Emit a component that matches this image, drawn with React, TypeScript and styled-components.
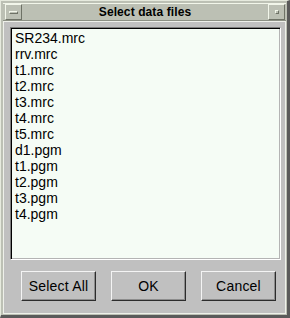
import styled, { createGlobalStyle } from "styled-components";

const files = [
  "SR234.mrc",
  "rrv.mrc",
  "t1.mrc",
  "t2.mrc",
  "t3.mrc",
  "t4.mrc",
  "t5.mrc",
  "d1.pgm",
  "t1.pgm",
  "t2.pgm",
  "t3.pgm",
  "t4.pgm",
];

export default function App() {
  return (
    <>
      <GlobalStyle />
      <Window>
        <TitleBar>
          <TitleButton>
            <MenuBar />
          </TitleButton>
          <Title>Select data files</Title>
          <TitleButton>
            <Dot />
          </TitleButton>
        </TitleBar>
        <Body>
          <ListBox>
            {files.map((f, i) => (
              <Item key={i}>{f}</Item>
            ))}
          </ListBox>
          <ButtonRow>
            <Button>Select All</Button>
            <Button>OK</Button>
            <Button>Cancel</Button>
          </ButtonRow>
        </Body>
      </Window>
    </>
  );
}

const GlobalStyle = createGlobalStyle`
  html, body {
    margin: 0;
    padding: 0;
    background: #c0c0c0;
  }
  * {
    box-sizing: border-box;
  }
`;

const Window = styled.div`
  width: 290px;
  height: 318px;
  background: #bcc0b4;
  border-top: 1px solid #e6eade;
  border-left: 1px solid #e6eade;
  border-right: 3px solid #5a5a5a;
  border-bottom: 3px solid #5a5a5a;
  padding: 2px 1px 1px 2px;
  display: flex;
  flex-direction: column;
  font-family: "Liberation Sans", Arial, sans-serif;
`;

const TitleBar = styled.div`
  height: 18px;
  display: flex;
  align-items: center;
  padding: 0 1px 0 2px;
  border-top: 1px solid #f2f6ea;
  border-bottom: 1px solid #8c9084;
`;

const TitleButton = styled.div`
  width: 17px;
  height: 16px;
  flex-shrink: 0;
  display: flex;
  align-items: center;
  justify-content: center;
  border-top: 1px solid #f2f6ea;
  border-left: 1px solid #f2f6ea;
  border-right: 1px solid #6e7266;
  border-bottom: 1px solid #6e7266;
`;

const MenuBar = styled.div`
  width: 9px;
  height: 3px;
  border-top: 1px solid #f2f6ea;
  border-left: 1px solid #f2f6ea;
  border-right: 1px solid #6e7266;
  border-bottom: 1px solid #6e7266;
`;

const Dot = styled.div`
  width: 4px;
  height: 4px;
  border-top: 1px solid #f2f6ea;
  border-left: 1px solid #f2f6ea;
  border-right: 1px solid #6e7266;
  border-bottom: 1px solid #6e7266;
`;

const Title = styled.div`
  flex: 1;
  text-align: center;
  font-size: 12px;
  font-weight: 700;
  color: #000;
  line-height: 16px;
  letter-spacing: 0.1px;
`;

const Body = styled.div`
  flex: 1;
  background: #c0c0c0;
  border: 1px solid #eef0ea;
  padding: 5px 4px 0 6px;
  display: flex;
  flex-direction: column;
`;

const ListBox = styled.div`
  height: 233px;
  background: #f5fcf5;
  border-top: 1px solid #7c7c7c;
  border-left: 1px solid #7c7c7c;
  border-right: 1px solid #ffffff;
  border-bottom: 1px solid #ffffff;
  box-shadow: inset 1px 1px 0 #000, inset -1px -1px 0 #b4b4b4;
  padding: 2px 4px;
  overflow: hidden;
`;

const Item = styled.div`
  font-size: 14px;
  line-height: 16px;
  height: 16px;
  color: #000;
  white-space: nowrap;
`;

const ButtonRow = styled.div`
  display: flex;
  gap: 15px;
  margin-top: 11px;
  padding-left: 11px;
`;

const Button = styled.button`
  width: 75px;
  height: 30px;
  padding: 0;
  background: #c0c0c0;
  font-family: "Liberation Sans", Arial, sans-serif;
  font-size: 14px;
  letter-spacing: 0.2px;
  color: #000;
  border-top: 1px solid #f4f4f4;
  border-left: 1px solid #f4f4f4;
  border-right: 1px solid #2c2c2c;
  border-bottom: 1px solid #2c2c2c;
  box-shadow: inset -1px -1px 0 #8c8c8c;
  border-radius: 0;
`;
